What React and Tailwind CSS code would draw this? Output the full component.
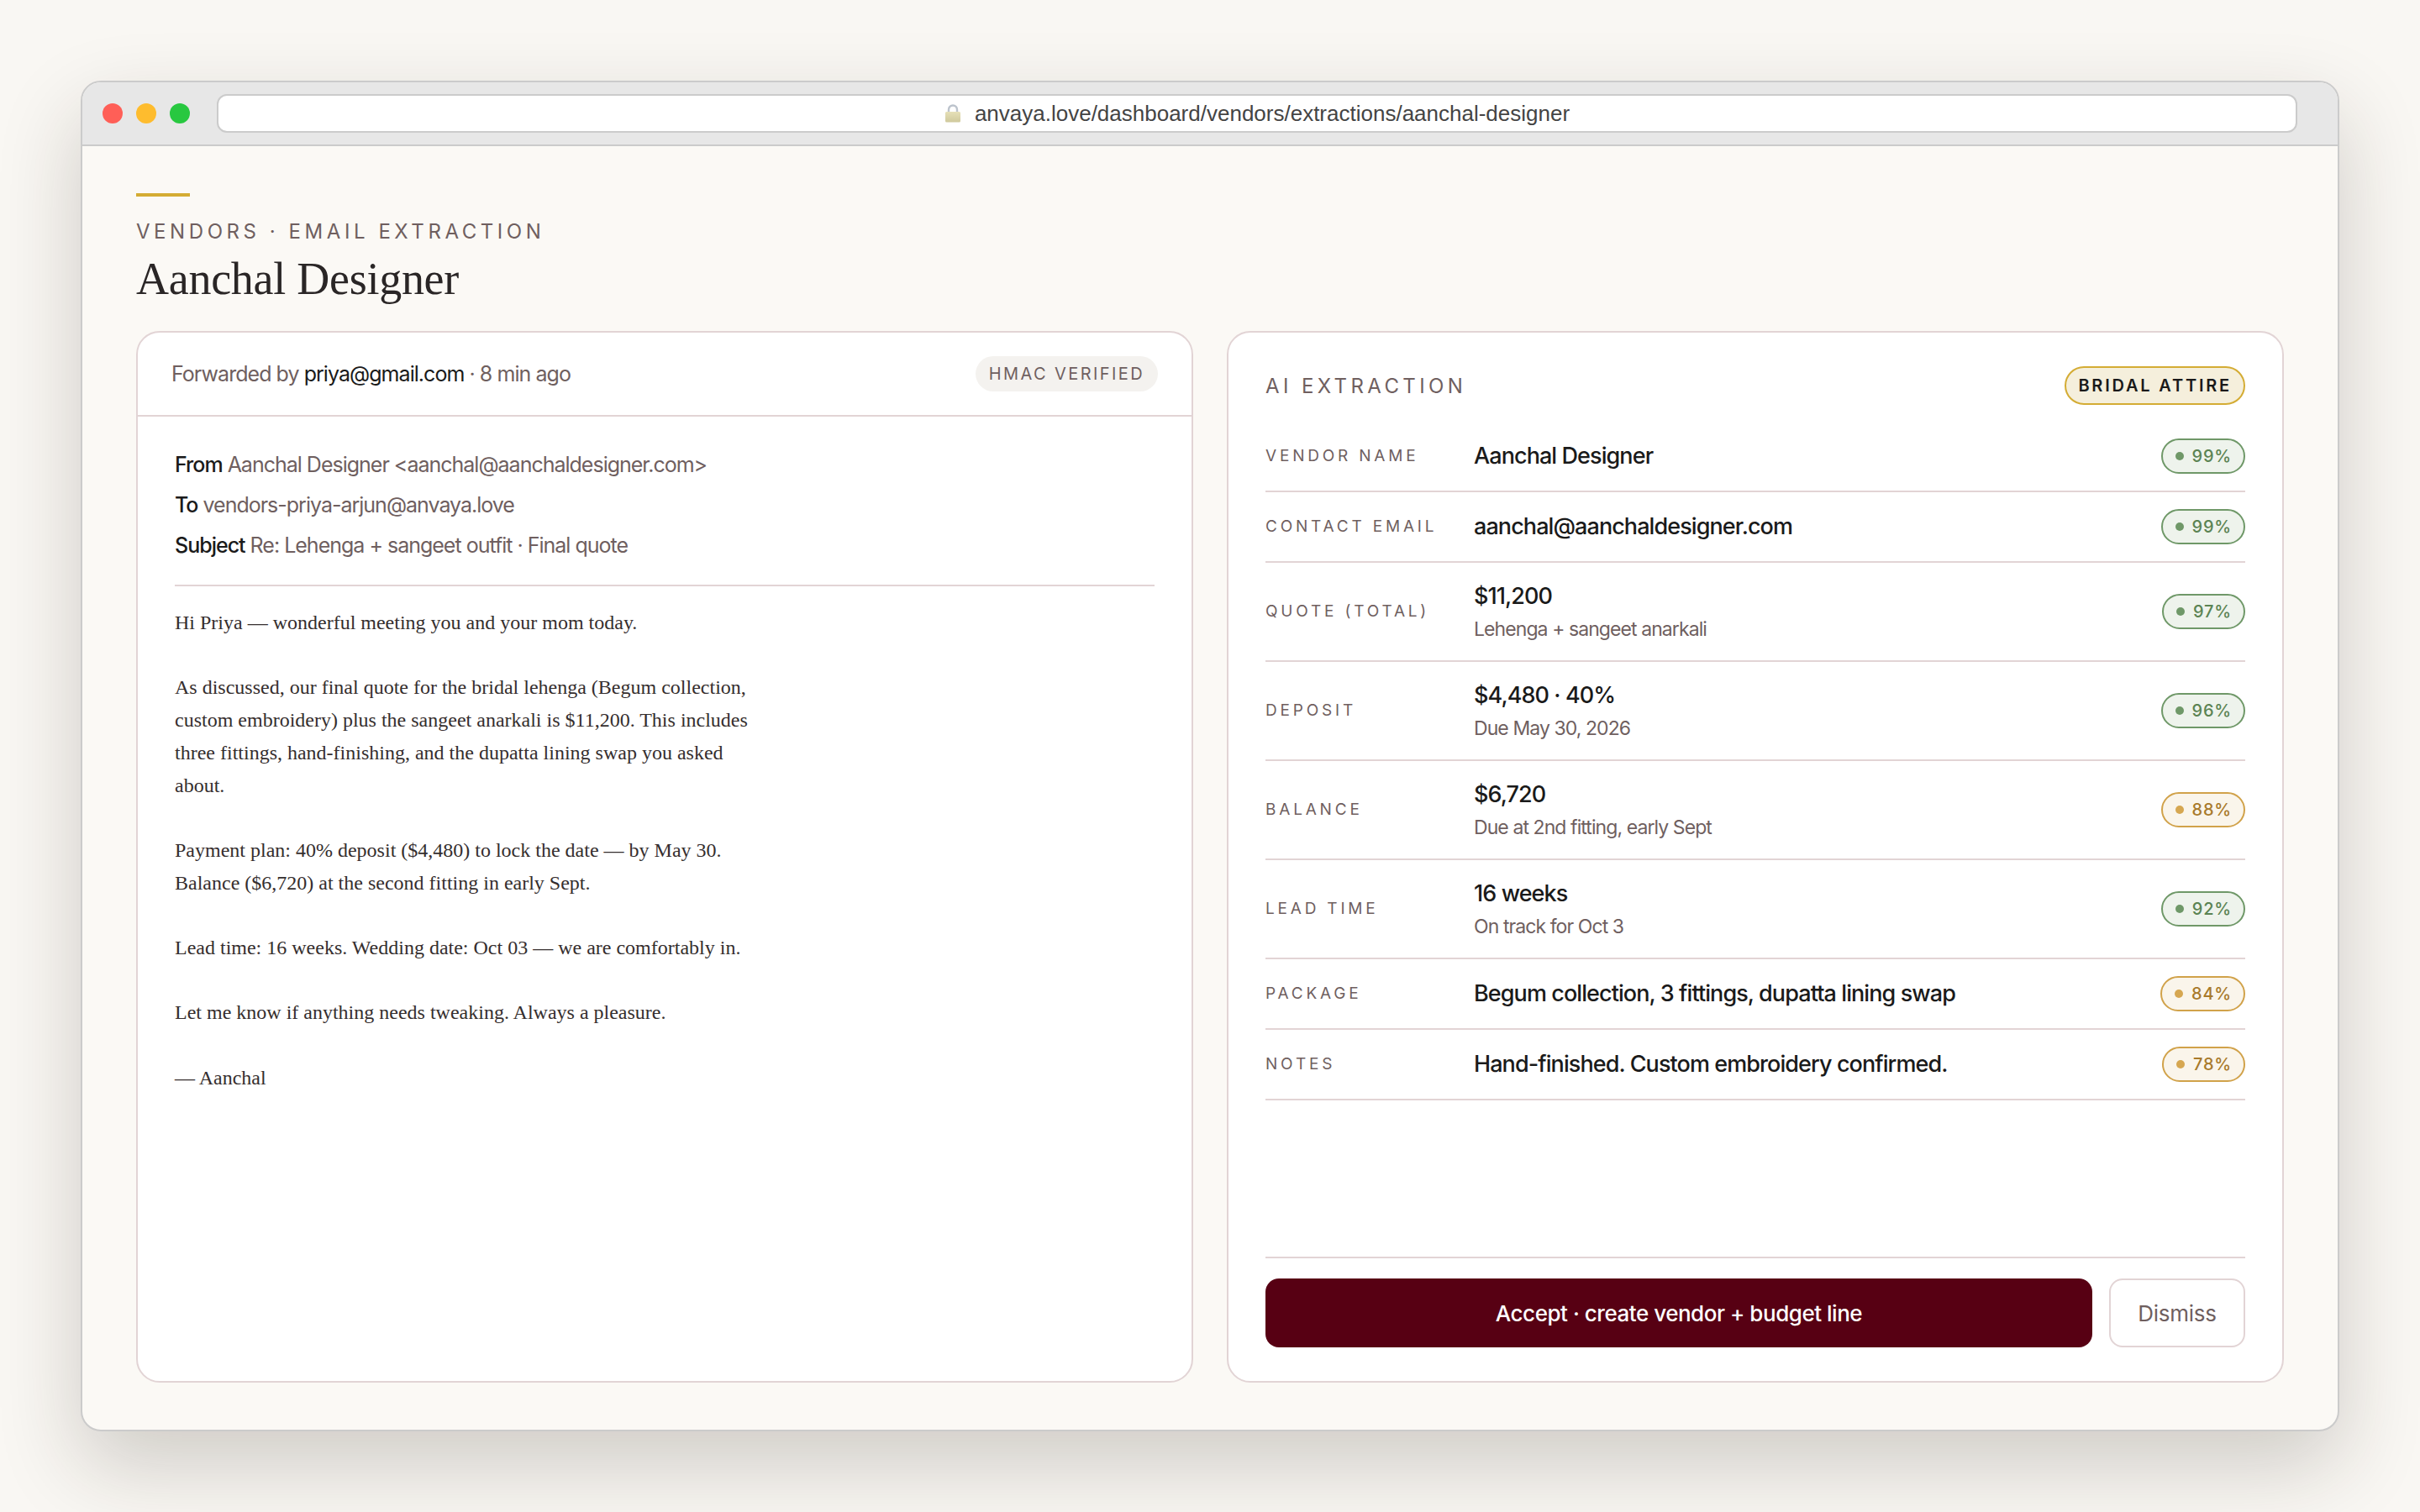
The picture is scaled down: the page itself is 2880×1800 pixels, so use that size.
import React from "react";

const sans = "font-['Inter','Liberation_Sans',sans-serif]";

const fields = [
  { label: "Vendor name", value: "Aanchal Designer", score: "99%", tone: "green" },
  { label: "Contact email", value: "aanchal@aanchaldesigner.com", score: "99%", tone: "green" },
  { label: "Quote (total)", value: "$11,200", sub: "Lehenga + sangeet anarkali", score: "97%", tone: "green" },
  { label: "Deposit", value: "$4,480 · 40%", sub: "Due May 30, 2026", score: "96%", tone: "green" },
  { label: "Balance", value: "$6,720", sub: "Due at 2nd fitting, early Sept", score: "88%", tone: "amber" },
  { label: "Lead time", value: "16 weeks", sub: "On track for Oct 3", score: "92%", tone: "green" },
  { label: "Package", value: "Begum collection, 3 fittings, dupatta lining swap", score: "84%", tone: "amber" },
  { label: "Notes", value: "Hand-finished. Custom embroidery confirmed.", score: "78%", tone: "amber" },
];

const emailBody = `Hi Priya — wonderful meeting you and your mom today.

As discussed, our final quote for the bridal lehenga (Begum collection,
custom embroidery) plus the sangeet anarkali is $11,200. This includes
three fittings, hand-finishing, and the dupatta lining swap you asked
about.

Payment plan: 40% deposit ($4,480) to lock the date — by May 30.
Balance ($6,720) at the second fitting in early Sept.

Lead time: 16 weeks. Wedding date: Oct 03 — we are comfortably in.

Let me know if anything needs tweaking. Always a pleasure.

— Aanchal`;

const LockIcon = () => (
  <svg width="20" height="22" viewBox="0 0 20 22">
    <defs>
      <linearGradient id="lockBody" x1="0" y1="0" x2="0" y2="1">
        <stop offset="0" stopColor="#e6e0b8" />
        <stop offset="1" stopColor="#cfc99c" />
      </linearGradient>
    </defs>
    <path d="M5 10V6.5a5 5 0 0 1 10 0V10" fill="none" stroke="#bcc3cc" strokeWidth="2.4" />
    <rect x="1" y="9" width="18" height="12.5" rx="1.5" fill="url(#lockBody)" />
  </svg>
);

const Score = ({ score, tone }) => {
  const green = tone === "green";
  return (
    <span
      className={`flex h-[42px] items-center gap-[10px] rounded-full border-2 pl-[15px] pr-[14px] text-[20px] font-medium tracking-[0.04em] ${
        green ? "border-[#6f9868] bg-[#eef3ec] text-[#5b8353]" : "border-[#d1a24a] bg-[#faf5eb] text-[#a87a2b]"
      }`}
    >
      <span className={`size-[10px] rounded-full ${green ? "bg-[#6f9868]" : "bg-[#d6a751]"}`}></span>
      {score}
    </span>
  );
};

const FieldRow = ({ field }) => (
  <div className="flex items-center border-b-2 border-[#e2d4d5] py-5">
    <div className="w-[248px] shrink-0 text-[19px] uppercase tracking-[0.2em] text-[#6f5f5f]">{field.label}</div>
    <div className="min-w-0 flex-1">
      <div className="text-[27px] font-medium leading-[40px] tracking-[-0.034em] text-[#1a1a1a]">{field.value}</div>
      {field.sub && (
        <div className="mt-[2px] text-[23px] leading-[34px] tracking-[-0.04em] text-[#6f5f5f]">{field.sub}</div>
      )}
    </div>
    <Score score={field.score} tone={field.tone} />
  </div>
);

const App = () => {
  return (
    <div className={`h-[1800px] bg-[#f9f7f3] p-24 ${sans}`}>
      <div className="flex h-[1608px] flex-col overflow-hidden rounded-[24px] border-2 border-[#cbcbcb] bg-[#fbf9f5] shadow-[0_40px_100px_rgba(40,30,20,0.2)]">
        {/* Browser bar */}
        <div className="flex h-[76px] shrink-0 items-center gap-8 border-b-2 border-[#cbcbcb] bg-[#e7e7e7] pl-6 pr-[48px]">
          <div className="flex gap-4">
            <span className="size-6 rounded-full bg-[#ff5f57]"></span>
            <span className="size-6 rounded-full bg-[#febc2e]"></span>
            <span className="size-6 rounded-full bg-[#28c840]"></span>
          </div>
          <div className="flex h-[46px] flex-1 items-center justify-center gap-4 rounded-xl border-2 border-[#cbcbcb] bg-white font-['Liberation_Sans',sans-serif] text-[26px] text-[#444444]">
            <LockIcon />
            <span>anvaya.love/dashboard/vendors/extractions/aanchal-designer</span>
          </div>
        </div>

        <div className="flex min-h-0 flex-1 flex-col px-16 pb-14 pt-14">
          <div className="h-1 w-16 bg-[#d4ac34]"></div>
          <div className="mt-[26px] text-[24px] leading-[32px] tracking-[0.19em] text-[#6f5f5f]">
            VENDORS · EMAIL EXTRACTION
          </div>
          <h1 className="mt-[8px] font-['Liberation_Serif',serif] text-[54px] font-normal leading-[64px] tracking-[-0.005em] text-[#2a2626]">
            Aanchal Designer
          </h1>

          <div className="mt-[30px] grid min-h-0 flex-1 grid-cols-2 gap-10">
            {/* Email */}
            <div className="flex flex-col rounded-[28px] border-2 border-[#e2d4d5] bg-white">
              <div className="flex h-[100px] items-center justify-between border-b-2 border-[#e2d4d5] pl-10 pr-10">
                <div className="pt-[2px] text-[25px] tracking-[-0.038em] text-[#6f5f5f]">
                  Forwarded by <span className="text-[#1a1a1a]">priya@gmail.com</span> · 8 min ago
                </div>
                <span className="rounded-full bg-[#f4f2ef] px-4 py-[7px] text-[20px] leading-[28px] tracking-[0.12em] text-[#6f5f5f]">
                  HMAC VERIFIED
                </span>
              </div>
              <div className="px-11 pt-[33px]">
                <div className="border-b-2 border-[#e2d4d5] pb-[23px] text-[25px] leading-[48px] tracking-[-0.04em] text-[#6f5f5f]">
                  <div>
                    <span className="font-medium text-[#1a1a1a]">From</span> Aanchal Designer &lt;aanchal@aanchaldesigner.com&gt;
                  </div>
                  <div>
                    <span className="font-medium text-[#1a1a1a]">To</span> vendors-priya-arjun@anvaya.love
                  </div>
                  <div>
                    <span className="font-medium text-[#1a1a1a]">Subject</span> Re: Lehenga + sangeet outfit · Final quote
                  </div>
                </div>
                <p className="whitespace-pre-line pt-[24px] font-['Liberation_Serif',serif] text-[24px] leading-[38.7px] text-[#352e2e]">
                  {emailBody}
                </p>
              </div>
            </div>

            {/* Extraction */}
            <div className="flex flex-col rounded-[28px] border-2 border-[#e2d4d5] bg-white px-11 pb-10 pt-10">
              <div className="mb-5 flex h-[46px] items-center justify-between">
                <div className="pt-[2px] text-[24px] tracking-[0.183em] text-[#6f5f5f]">AI EXTRACTION</div>
                <span className="flex h-[46px] items-center rounded-full border-2 border-[#d4ac34] bg-[#f5efdc] px-[14px] text-[20px] font-semibold tracking-[0.14em] text-[#1a1a1a]">
                  BRIDAL ATTIRE
                </span>
              </div>
              <div>
                {fields.map((field) => (
                  <FieldRow key={field.label} field={field} />
                ))}
              </div>
              <div className="mt-auto flex gap-5 border-t-2 border-[#e2d4d5] pt-6">
                <button className="h-[82px] flex-1 rounded-2xl bg-[#570013] text-[26px] font-medium tracking-[-0.018em] text-white">
                  Accept · create vendor + budget line
                </button>
                <button className="h-[82px] w-[162px] rounded-2xl border-2 border-[#e2d4d5] bg-white text-[26px] tracking-[-0.01em] text-[#6f5f5f]">
                  Dismiss
                </button>
              </div>
            </div>
          </div>
        </div>
      </div>
    </div>
  );
};

export default App;
